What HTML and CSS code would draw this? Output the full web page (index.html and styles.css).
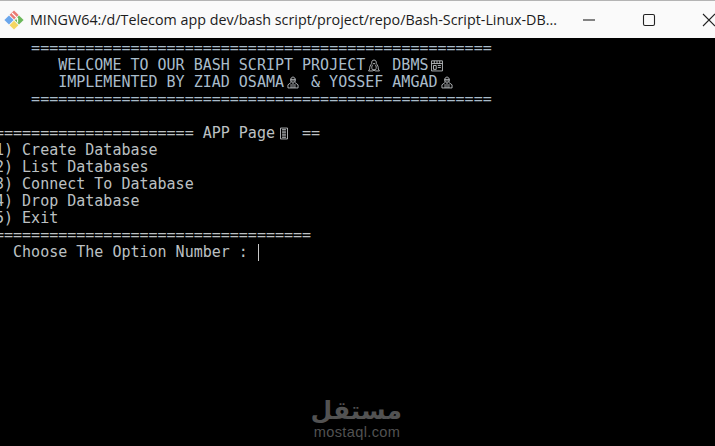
FILE: index.html
```html
<!DOCTYPE html>
<html lang="en">
<head>
<meta charset="utf-8">
<title>MINGW64</title>
<link rel="stylesheet" href="styles.css">
</head>
<body>
<div class="window">
  <header class="titlebar">
    <svg class="git-logo" viewBox="0 0 20 20" aria-hidden="true">
      <path d="M10 0.5 L14.6 5 L10.2 9.4 L5.6 4.8Z" fill="#ea7a72"/>
      <path d="M15 5.4 L19.6 10 L15 14.6 L10.6 10Z" fill="#6cb85a"/>
      <path d="M10 10.8 L14.4 15.2 L10 19.6 L5.6 15.2Z" fill="#f4d660"/>
      <path d="M5 5.4 L9.6 10 L5 14.6 L0.4 10Z" fill="#6aa6ec"/>
      <path d="M8 3 L13.6 8.6 V12.5 M13.6 9 L10.8 9" stroke="#fff" stroke-width="1.1" fill="none"/>
    </svg>
    <div class="title">MINGW64:/d/Telecom app dev/bash script/project/repo/Bash-Script-Linux-DB...</div>
    <div class="controls">
      <svg class="ctl" viewBox="0 0 14 14" aria-hidden="true"><path d="M1 7 H13" /></svg>
      <svg class="ctl" viewBox="0 0 14 14" aria-hidden="true"><rect x="1.5" y="1.5" width="11" height="11" rx="1.5"/></svg>
      <svg class="ctl ctl-close" viewBox="0 0 14 14" aria-hidden="true"><path d="M1 1 L13 13 M13 1 L1 13"/></svg>
    </div>
  </header>
  <main class="terminal">
    <div class="line head">    ===================================================</div>
    <div class="line head">       WELCOME TO OUR BASH SCRIPT PROJECT<span class="gl"><svg viewBox="0 0 18 16"><path d="M9 1 C6.5 1 5.8 3 6 5.5 C4.5 7.5 3 10 3.5 12.5 L2 15 H7 L9 14 L11 15 H16 L14.5 12.5 C15 10 13.5 7.5 12 5.5 C12.2 3 11.5 1 9 1Z M7.2 7 C5.8 9 5.8 11.5 7 13.5 H11 C12.2 11.5 12.2 9 10.8 7 M7.5 5 L9 6 L10.5 5"/></svg></span> DBMS<span class="gl"><svg viewBox="0 0 18 16"><path d="M2 2 H16 V15 H2Z M2 5.5 H16 M5.5 2 V5.5 M9 2 V5.5 M12.5 2 V5.5 M4.5 8 H8 V13 H4.5Z M10 8 H14 M10 10.5 H14"/></svg></span></div>
    <div class="line head">       IMPLEMENTED BY ZIAD OSAMA<span class="gl"><svg viewBox="0 0 18 16"><path d="M9 1 C6.8 1 6 3 6 5 C6 7 7.5 8.5 9 8.5 C10.5 8.5 12 7 12 5 C12 3 11.2 1 9 1Z M6 4 H12 M6 6 H12 M6.5 8 L2.5 11 V15 H15.5 V11 L11.5 8 M6.5 10 V15 M11.5 10 V15 M9 9 V15"/></svg></span> &amp; YOSSEF AMGAD<span class="gl"><svg viewBox="0 0 18 16"><path d="M9 1 C6.8 1 6 3 6 5 C6 7 7.5 8.5 9 8.5 C10.5 8.5 12 7 12 5 C12 3 11.2 1 9 1Z M6 4 H12 M6 6 H12 M6.5 8 L2.5 11 V15 H15.5 V11 L11.5 8 M6.5 10 V15 M11.5 10 V15 M9 9 V15"/></svg></span></div>
    <div class="line head">    ===================================================</div>
    <div class="line">&nbsp;</div>
    <div class="line">====================== APP Page<span class="gl"><svg viewBox="0 0 18 16"><path d="M4.5 1 H13.5 V15 H4.5Z M6.5 3 H11.5 M6.5 5 H11.5 M6.5 7 H11.5 M6.5 9 H11.5 M6.5 11 H11.5 M6.5 13 H11.5"/></svg></span> ==</div>
    <div class="line">1) Create Database</div>
    <div class="line">2) List Databases</div>
    <div class="line">3) Connect To Database</div>
    <div class="line">4) Drop Database</div>
    <div class="line">5) Exit</div>
    <div class="line">===================================</div>
    <div class="line">  Choose The Option Number : <span class="cursor"></span></div>
  </main>
</div>
<div class="watermark">
  <div class="wm-ar" dir="rtl" lang="ar">مستقل</div>
  <div class="wm-en">mostaql.com</div>
</div>
</body>
</html>
```
FILE: styles.css
```css
* { box-sizing: border-box; }
html, body { margin: 0; height: 100%; background: #000; overflow: hidden; }
.window { width: 715px; height: 446px; display: flex; flex-direction: column; overflow: hidden; }
.titlebar {
  height: 38px; flex: none; display: flex; align-items: center;
  background: #fafafa; border-top: 1px solid #b4b4b4;
  padding-left: 4px; color: #1c1c1c;
}
.git-logo { width: 20px; height: 20px; flex: none; margin-right: 6px; }
.title { font: 14.3px/20px "Open Sans", sans-serif; white-space: nowrap; flex: 1; }
.controls { display: flex; gap: 46px; margin-right: -1px; }
.ctl { width: 14px; height: 14px; fill: none; stroke: #222; stroke-width: 1.1; }
.terminal {
  flex: 1; background: #000; margin-left: -5px; padding-top: 2px;
  font: 15px/17px "DejaVu Sans Mono", monospace; color: #bcc0c3;
}
.line { height: 17px; white-space: pre; }
.head { color: #a9bccb; }
.gl { display: inline-block; width: 2ch; height: 17px; vertical-align: top; padding: 2px 0 0 2px; }
.gl svg { display: block; width: 14px; height: 13px; fill: none; stroke: #c4c8cb; stroke-width: 1.1; }
.cursor { display: inline-block; width: 1px; height: 17px; background: #c8c8c8; vertical-align: top; margin-left: 1px; }
.watermark {
  position: absolute; left: 312px; top: 397px; width: 90px; text-align: center; color: #525252;
}
.wm-ar { font: bold 25px/28px "DejaVu Sans", sans-serif; }
.wm-en { font: 14.6px/14px "Liberation Sans", sans-serif; letter-spacing: .35px; white-space: nowrap; }
```
